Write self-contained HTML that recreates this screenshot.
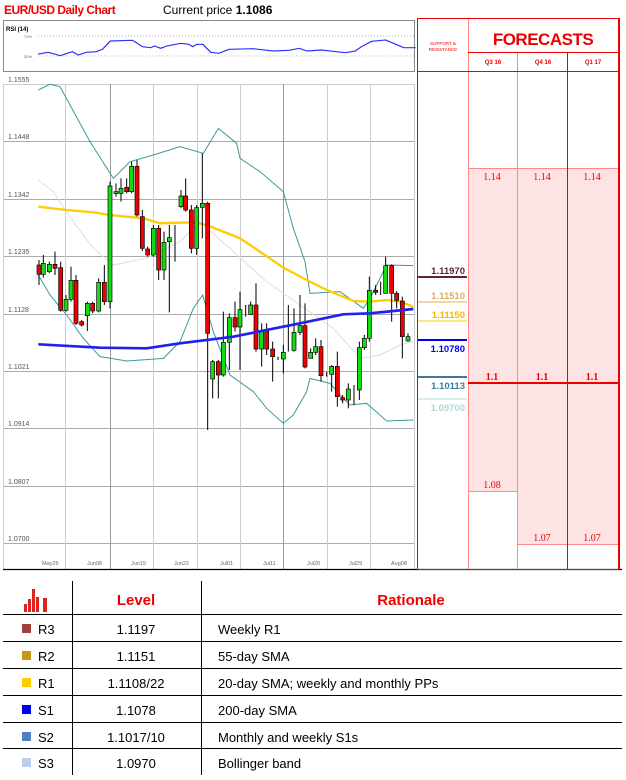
<!DOCTYPE html>
<html><head><meta charset="utf-8"><style>
*{margin:0;padding:0;box-sizing:border-box}
body{width:626px;height:780px;background:#fff;position:relative;font-family:"Liberation Sans",sans-serif;overflow:hidden}
.a{position:absolute}
</style></head><body>
<div class="a" style="left:4px;top:3px;font-size:12px;font-weight:bold;color:#e00;letter-spacing:-0.5px">EUR/USD Daily Chart</div>
<div class="a" style="left:163px;top:3px;font-size:12px;color:#000">Current price <b>1.1086</b></div>

<svg class="a" style="left:0;top:0" width="626" height="780">
<rect x="3.5" y="20.5" width="411" height="51" fill="#fff" stroke="#888"/>
<text x="6" y="31" font-size="6" font-weight="bold" font-family="Liberation Sans">RSI (14)</text>
<text x="24" y="38" font-size="4" fill="#666" font-family="Liberation Sans">70%</text>
<text x="24" y="58" font-size="4" fill="#666" font-family="Liberation Sans">30%</text>
<line x1="38" y1="36" x2="414" y2="36" stroke="#999" stroke-dasharray="1,2" stroke-width="0.7"/>
<line x1="38" y1="56" x2="414" y2="56" stroke="#999" stroke-dasharray="1,2" stroke-width="0.7"/>
<g transform="scale(0.4016,0.3333)">
<polyline fill="none" stroke="#33f" stroke-width="3.5" points="95,162 120,157 150,167 180,155 195,165 215,157 240,155 255,148 275,123 330,121 355,140 375,143 385,138 400,145 415,138 450,130 470,133 480,140 490,133 505,133 525,157 545,160 570,148 630,146 680,153 720,151 745,145 765,153 800,150 860,158 885,153 900,140 925,124 960,120 980,130 1005,143 1035,143"/>
</g>
<g stroke="#aaa" stroke-width="1">
<line x1="3" y1="84.5" x2="414" y2="84.5" stroke="#ccc"/>
<line x1="3" y1="141.5" x2="414" y2="141.5"/>
<line x1="3" y1="199.5" x2="414" y2="199.5"/>
<line x1="3" y1="256.5" x2="414" y2="256.5"/>
<line x1="3" y1="314.5" x2="414" y2="314.5"/>
<line x1="3" y1="371.5" x2="414" y2="371.5"/>
<line x1="3" y1="428.5" x2="414" y2="428.5"/>
<line x1="3" y1="486.5" x2="414" y2="486.5"/>
<line x1="3" y1="543.5" x2="414" y2="543.5"/>
</g>
<g stroke="#ccc" stroke-width="1">
<line x1="3.5" y1="84" x2="3.5" y2="569"/>
<line x1="65.5" y1="84" x2="65.5" y2="569"/>
<line x1="110.5" y1="84" x2="110.5" y2="569" stroke="#999"/>
<line x1="153.5" y1="84" x2="153.5" y2="569"/>
<line x1="197.5" y1="84" x2="197.5" y2="569"/>
<line x1="240.5" y1="84" x2="240.5" y2="569"/>
<line x1="283.5" y1="84" x2="283.5" y2="569" stroke="#999"/>
<line x1="327.5" y1="84" x2="327.5" y2="569"/>
<line x1="370.5" y1="84" x2="370.5" y2="569"/>
<line x1="414.5" y1="84" x2="414.5" y2="569"/>
</g>
<g font-size="7" fill="#555" font-family="Liberation Sans">
<text x="8" y="82">1.1555</text><text x="8" y="139">1.1448</text><text x="8" y="197">1.1342</text>
<text x="8" y="254">1.1235</text><text x="8" y="312">1.1128</text><text x="8" y="369">1.1021</text>
<text x="8" y="426">1.0914</text><text x="8" y="484">1.0807</text><text x="8" y="541">1.0700</text>
</g>
<g font-size="5.5" fill="#666" font-family="Liberation Sans">
<text x="42" y="565">May25</text><text x="87" y="565">Jun08</text><text x="131" y="565">Jun19</text><text x="174" y="565">Jun22</text><text x="220" y="565">Jul01</text><text x="263" y="565">Jul11</text><text x="307" y="565">Jul20</text><text x="349" y="565">Jul29</text><text x="391" y="565">Aug08</text>
</g>
<g transform="translate(0,75) scale(0.33333)" fill="none">
<polyline stroke="#ddd" stroke-width="3" points="115,315 160,350 220,440 280,520 340,570 440,550 540,500 600,440 700,530 800,620 900,690 1000,760 1080,850 1140,840 1200,810 1240,800"/>
<polyline stroke="#3a9a9a" stroke-width="3" points="115,45 150,28 180,35 210,90 270,200 340,310 390,260 460,240 540,215 610,235 655,160 710,205 720,250 780,290 850,350 880,460 915,560 930,655 1020,650 1090,700 1110,670 1160,570 1240,572"/>
<polyline stroke="#3a9a9a" stroke-width="3" points="115,600 150,660 200,720 250,790 300,845 320,848 380,858 490,850 540,800 580,700 608,660 640,770 690,900 760,950 800,1000 850,1045 880,1020 920,950 930,910 990,925 1020,960 1050,990 1100,985 1160,1038 1240,1035"/>
<polyline stroke="#fc0" stroke-width="7" points="115,395 200,405 280,412 330,420 430,430 480,445 580,442 620,450 720,490 780,530 850,578 920,615 980,645 1060,678 1110,680 1160,675 1200,680 1240,695"/>
<g stroke="#000" stroke-width="3">
<path d="M117,555V630M130,540V608M148,560V595M165,530V600M182,560V710M198,660V710M213,575V680M228,600V750M245,735V755M262,680V768M278,680V715M296,610V712M313,570V690M330,320V700M348,325V365M363,310V380M380,310V355M395,260V355M411,255V425M427,405V528M443,515V545M460,450V545M476,450V615M492,470V615M508,450V712M525,450V560M543,345V400M557,310V410M574,390V535M590,390V540M607,235V490M623,380V1065M638,855V970M655,855V970M670,710V905M688,715V885M705,680V770M720,650V885M737,690V725M752,680V720M768,625V830M785,745V875M800,745V840M818,800V920M834,845V855M850,810V895M865,690V830M882,700V830M900,660V780M915,685V880M932,820V850M947,790V840M963,795V920M980,890V905M995,870V950M1012,830V995M1028,960V985M1045,925V1000M1062,930V990M1078,800V975M1093,780V825M1108,605V800M1127,630V660M1142,620V660M1157,545V655M1175,568V740M1190,648V700M1207,665V850M1224,775V800"/>
</g>
<g stroke="#000" stroke-width="2">
<rect x="111" y="570" width="12" height="28" fill="#e00"/>
<rect x="124" y="565" width="12" height="33" fill="#1d1"/>
<rect x="142" y="568" width="12" height="22" fill="#1d1"/>
<rect x="159" y="568" width="12" height="12" fill="#e00"/>
<rect x="176" y="578" width="12" height="128" fill="#e00"/>
<rect x="192" y="673" width="12" height="33" fill="#1d1"/>
<rect x="207" y="616" width="12" height="57" fill="#1d1"/>
<rect x="222" y="616" width="12" height="129" fill="#e00"/>
<rect x="239" y="740" width="12" height="10" fill="#e00"/>
<rect x="256" y="685" width="12" height="37" fill="#1d1"/>
<rect x="272" y="685" width="12" height="23" fill="#e00"/>
<rect x="290" y="622" width="12" height="86" fill="#1d1"/>
<rect x="307" y="622" width="12" height="58" fill="#e00"/>
<rect x="324" y="333" width="12" height="347" fill="#1d1"/>
<rect x="342" y="350" width="12" height="6" fill="#1d1"/>
<rect x="357" y="340" width="12" height="15" fill="#1d1"/>
<rect x="374" y="337" width="12" height="13" fill="#e00"/>
<rect x="389" y="274" width="12" height="76" fill="#1d1"/>
<rect x="405" y="274" width="12" height="146" fill="#e00"/>
<rect x="421" y="425" width="12" height="95" fill="#e00"/>
<rect x="437" y="522" width="12" height="18" fill="#e00"/>
<rect x="454" y="460" width="12" height="80" fill="#1d1"/>
<rect x="470" y="460" width="12" height="125" fill="#e00"/>
<rect x="486" y="502" width="12" height="83" fill="#1d1"/>
<rect x="502" y="488" width="12" height="12" fill="#1d1"/>
<rect x="537" y="363" width="12" height="32" fill="#1d1"/>
<rect x="551" y="363" width="12" height="42" fill="#e00"/>
<rect x="568" y="405" width="12" height="115" fill="#e00"/>
<rect x="584" y="398" width="12" height="122" fill="#1d1"/>
<rect x="601" y="385" width="12" height="12" fill="#1d1"/>
<rect x="617" y="385" width="12" height="390" fill="#e00"/>
<rect x="632" y="860" width="12" height="52" fill="#1d1"/>
<rect x="649" y="860" width="12" height="40" fill="#e00"/>
<rect x="664" y="802" width="12" height="98" fill="#1d1"/>
<rect x="682" y="728" width="12" height="74" fill="#1d1"/>
<rect x="699" y="728" width="12" height="28" fill="#e00"/>
<rect x="714" y="704" width="12" height="52" fill="#1d1"/>
<rect x="746" y="690" width="12" height="28" fill="#1d1"/>
<rect x="762" y="690" width="12" height="132" fill="#e00"/>
<rect x="779" y="768" width="12" height="54" fill="#1d1"/>
<rect x="794" y="768" width="12" height="54" fill="#e00"/>
<rect x="812" y="822" width="12" height="23" fill="#e00"/>
<rect x="844" y="832" width="12" height="20" fill="#1d1"/>
<rect x="876" y="772" width="12" height="54" fill="#1d1"/>
<rect x="894" y="752" width="12" height="20" fill="#1d1"/>
<rect x="909" y="752" width="12" height="124" fill="#e00"/>
<rect x="926" y="832" width="12" height="18" fill="#1d1"/>
<rect x="941" y="815" width="12" height="17" fill="#1d1"/>
<rect x="957" y="815" width="12" height="87" fill="#e00"/>
<rect x="989" y="874" width="12" height="24" fill="#1d1"/>
<rect x="1006" y="874" width="12" height="91" fill="#e00"/>
<rect x="1022" y="968" width="12" height="7" fill="#e00"/>
<rect x="1039" y="942" width="12" height="33" fill="#1d1"/>
<rect x="1072" y="818" width="12" height="127" fill="#1d1"/>
<rect x="1087" y="790" width="12" height="28" fill="#1d1"/>
<rect x="1102" y="646" width="12" height="144" fill="#1d1"/>
<rect x="1121" y="646" width="12" height="6" fill="#e00"/>
<rect x="1151" y="572" width="12" height="83" fill="#1d1"/>
<rect x="1169" y="572" width="12" height="83" fill="#e00"/>
<rect x="1184" y="655" width="12" height="21" fill="#e00"/>
<rect x="1201" y="678" width="12" height="107" fill="#e00"/>
<rect x="1218" y="785" width="12" height="13" fill="#1d1"/>
</g>
<polyline stroke="#2222ee" stroke-width="8" points="115,808 300,818 440,820 540,805 700,785 900,745 1030,718 1110,715 1240,702"/>
</g>
<line x1="3" y1="569.5" x2="622" y2="569.5" stroke="#000" stroke-width="1.2"/>

<rect x="468" y="168" width="50" height="323" fill="#fde3e3"/>
<rect x="518" y="168" width="101" height="376" fill="#fde3e3"/>
<g stroke="#f88" stroke-width="1">
<line x1="468" y1="168.5" x2="619" y2="168.5"/>
<line x1="468" y1="491.5" x2="518" y2="491.5"/>
<line x1="518" y1="544.5" x2="619" y2="544.5"/>
<line x1="468.5" y1="18" x2="468.5" y2="569"/>
<line x1="517.5" y1="52" x2="517.5" y2="569"/>
</g>
<g stroke="#e00" stroke-width="1">
<rect x="417.5" y="18.5" width="201.5" height="551" fill="none"/>
<line x1="418" y1="71.5" x2="619" y2="71.5"/>
<line x1="468" y1="52.5" x2="619" y2="52.5"/>
<line x1="567.5" y1="52" x2="567.5" y2="569"/>
</g>
<line x1="619" y1="18" x2="619" y2="569" stroke="#e00" stroke-width="2"/>
<line x1="468" y1="383" x2="619" y2="383" stroke="#e00" stroke-width="2"/>
<text x="443" y="45" font-size="4.5" fill="#e00" text-anchor="middle" font-family="Liberation Sans">SUPPORT &amp;</text>
<text x="443" y="51" font-size="4.5" fill="#e00" text-anchor="middle" font-family="Liberation Sans">RESISTANCE</text>
<text x="543" y="45" font-size="17" font-weight="bold" fill="#e00" text-anchor="middle" font-family="Liberation Sans" letter-spacing="-0.5">FORECASTS</text>
<g font-size="6" font-weight="bold" fill="#e00" text-anchor="middle" font-family="Liberation Sans">
<text x="493" y="64">Q3 16</text><text x="543" y="64">Q4 16</text><text x="593" y="64">Q1 17</text>
</g>
<g font-size="10" fill="#e00" text-anchor="middle" font-family="Liberation Serif">
<text x="492" y="180">1.14</text><text x="542" y="180">1.14</text><text x="592" y="180">1.14</text>
<text x="492" y="380" font-weight="bold">1.1</text><text x="542" y="380" font-weight="bold">1.1</text><text x="592" y="380" font-weight="bold">1.1</text>
<text x="492" y="488">1.08</text><text x="542" y="541">1.07</text><text x="592" y="541">1.07</text>
</g>
<g font-size="9.5" font-weight="bold" text-anchor="end" font-family="Liberation Sans">
<line x1="418" y1="277" x2="467" y2="277" stroke="#602040" stroke-width="2"/><text x="465" y="274" fill="#602040">1.11970</text>
<line x1="418" y1="302" x2="467" y2="302" stroke="#d8b060" stroke-width="1"/><text x="465" y="299" fill="#d8b060">1.11510</text>
<line x1="418" y1="321" x2="467" y2="321" stroke="#fc0" stroke-width="1"/><text x="465" y="318" fill="#f0b800">1.11150</text>
<line x1="418" y1="340" x2="467" y2="340" stroke="#00f" stroke-width="2"/><text x="465" y="352" fill="#00f">1.10780</text>
<line x1="418" y1="377" x2="467" y2="377" stroke="#3a7aa0" stroke-width="2"/><text x="465" y="389" fill="#3a7aa0">1.10113</text>
<line x1="418" y1="399" x2="467" y2="399" stroke="#b0d8d8" stroke-width="1"/><text x="465" y="411" fill="#b0d8d8">1.09700</text>
</g>

<g stroke="#000" stroke-width="1">
<line x1="72.5" y1="581" x2="72.5" y2="775"/>
<line x1="201.5" y1="581" x2="201.5" y2="775"/>
<line x1="3" y1="614.5" x2="622" y2="614.5"/>
<line x1="3" y1="641.5" x2="622" y2="641.5"/>
<line x1="3" y1="668.5" x2="622" y2="668.5"/>
<line x1="3" y1="695.5" x2="622" y2="695.5"/>
<line x1="3" y1="722.5" x2="622" y2="722.5"/>
<line x1="3" y1="748.5" x2="622" y2="748.5"/>
</g>
<g fill="#d22">
<rect x="24" y="604" width="3" height="8"/><rect x="28" y="599" width="3" height="13"/><rect x="32" y="589" width="3" height="23"/><rect x="36" y="597" width="3" height="15"/><rect x="43" y="598" width="4" height="14"/>
</g>
<g font-size="15" font-weight="bold" fill="#e00" text-anchor="middle" font-family="Liberation Sans">
<text x="136" y="605">Level</text><text x="411" y="605">Rationale</text>
</g>
<rect x="22" y="624" width="9" height="9" fill="#a04040"/>
<rect x="22" y="651" width="9" height="9" fill="#c99a10"/>
<rect x="22" y="678" width="9" height="9" fill="#ffcc00"/>
<rect x="22" y="705" width="9" height="9" fill="#0000ee"/>
<rect x="22" y="732" width="9" height="9" fill="#5080c0"/>
<rect x="22" y="758" width="9" height="9" fill="#b8d0e8"/>
<g font-size="13" fill="#000" font-family="Liberation Sans">
<text x="38" y="634">R3</text><text x="38" y="661">R2</text><text x="38" y="688">R1</text><text x="38" y="715">S1</text><text x="38" y="742">S2</text><text x="38" y="768">S3</text>
<g text-anchor="middle"><text x="136" y="634">1.1197</text><text x="136" y="661">1.1151</text><text x="136" y="688">1.1108/22</text><text x="136" y="715">1.1078</text><text x="136" y="742">1.1017/10</text><text x="136" y="768">1.0970</text></g>
<text x="218" y="634">Weekly R1</text><text x="218" y="661">55-day SMA</text><text x="218" y="688">20-day SMA; weekly and monthly PPs</text><text x="218" y="715">200-day SMA</text><text x="218" y="742">Monthly and weekly S1s</text><text x="218" y="768">Bollinger band</text>
</g>
</svg>
</body></html>
